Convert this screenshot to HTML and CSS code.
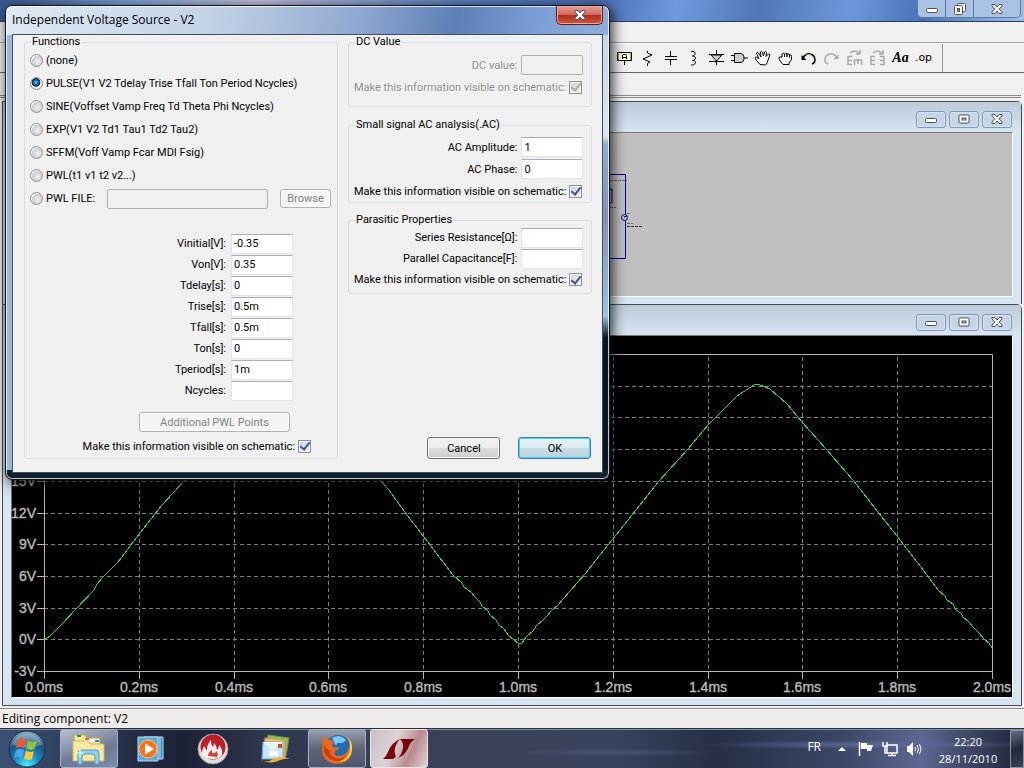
FILE: index.html
```html
<!DOCTYPE html>
<html lang="en">
<head>
<meta charset="utf-8">
<title>Independent Voltage Source - V2</title>
<link rel="stylesheet" href="styles.css">
</head>
<body>
<svg class="symbols" aria-hidden="true">
  <symbol id="win-min" viewBox="0 0 12 10"><rect x="0.5" y="4.5" width="11" height="4" rx="1" fill="#fff" stroke="#4b525e"/></symbol>
  <symbol id="win-max" viewBox="0 0 12 10"><rect x="1" y="1" width="10" height="8" rx="1" fill="#fff" stroke="#4b525e"/><rect x="4" y="4" width="4" height="2" fill="#c8d4e2" stroke="#4b525e"/></symbol>
  <symbol id="win-restore" viewBox="0 0 12 12"><rect x="3.5" y="0.5" width="8" height="8" rx="1" fill="#fff" stroke="#4b525e"/><rect x="0.5" y="2.5" width="8" height="9" rx="1" fill="#fff" stroke="#4b525e"/><rect x="3.5" y="5.5" width="2" height="3" fill="#88a" stroke="#4b525e"/></symbol>
  <symbol id="win-close" viewBox="0 0 12 10"><path d="M1 .5h3L6 3 8 .5h3v1.500L8.200 5 11 8v1.500H8L6 7 4 9.500H1V8l2.800-3L1 2z" fill="#fff" stroke="#4b525e"/></symbol>
</svg>

<div class="desktop">
<main class="app">
  <header class="app-title">
    <div class="app-controls">
      <button type="button" aria-label="Minimize"><svg width="12" height="10"><use href="#win-min"/></svg></button>
      <button type="button" aria-label="Restore"><svg width="12" height="12"><use href="#win-restore"/></svg></button>
      <button type="button" class="wide" aria-label="Close"><svg width="12" height="10"><use href="#win-close"/></svg></button>
    </div>
  </header>
  <div class="menu-strip"></div>
  <div class="toolbar">
    <div class="tools">
      <button type="button" aria-label="Label net"><svg width="17" height="18" viewBox="0 0 17 18"><path d="M1.500 3.500h14v8h-14z" fill="#ffffd0" stroke="#000"/><path d="M2.500 4v7M14.500 4v7" stroke="#aa6"/><path d="M8.500 12v4M6.500 10V6.500q0-1 1-1h2q1 0 1 1V10M6.500 8.500h4" fill="none" stroke="#000"/></svg></button>
      <button type="button" aria-label="Resistor"><svg width="17" height="18" viewBox="0 0 17 18"><path d="M8.500 2v2l4.500 2-9 4 7 3-2.500 1.500V17" fill="none" stroke="#000"/></svg></button>
      <button type="button" aria-label="Capacitor"><svg width="17" height="18" viewBox="0 0 17 18"><path d="M8.500 2v5M3 7.500h12M3 10.500h12M8.500 11v5" fill="none" stroke="#000"/></svg></button>
      <button type="button" aria-label="Inductor"><svg width="17" height="18" viewBox="0 0 17 18"><path d="M6 2.500h2c3 0 3 4-.5 4.500 4 0 4 4 0 4.500 4 0 4 4 0 4.500H6" fill="none" stroke="#000"/></svg></button>
      <button type="button" aria-label="Diode"><svg width="17" height="18" viewBox="0 0 17 18"><path d="M8.500 1v5M1 5.500h15M3 6l5.500 6L14 6zM1 12.500h15M8.500 12v4" fill="#ccc" stroke="#000"/></svg></button>
      <button type="button" aria-label="Component"><svg width="17" height="18" viewBox="0 0 17 18"><path d="M0 6.500h4M0 11.500h4M13 9h4M3.500 4.500H9q4 0 4 4.500t-4 4.500H3.500z" fill="#ccc" stroke="#000"/></svg></button>
      <button type="button" aria-label="Move"><svg width="17" height="18" viewBox="0 0 17 18"><path d="M6 15.500 1.500 10q-1-2 1-2L5 10 2.500 4.500q0-2 2-.5L7 8 6.500 3q1-1.500 2 0L9.500 7l1-4q1.500-1 2 .5l-.5 4 2.500-2.500q2 0 1 2L13 14l-1.500 2z" fill="#fff" stroke="#000"/></svg></button>
      <button type="button" aria-label="Drag"><svg width="17" height="18" viewBox="0 0 17 18"><path d="M6 15.500 2.500 11q-1-2 0-3H5V5q1.500-1.500 2.500 0v3V5Q9 3 10 5v3V5q2-1 2.500 1v2.500V6q2-.5 2 1.500v3L12 14v1.500z" fill="#fff" stroke="#000"/></svg></button>
      <button type="button" aria-label="Undo"><svg width="17" height="18" viewBox="0 0 17 18"><path d="M3 9q3-5 7-4 5 1 5 6 0 3-3 4" fill="none" stroke="#000" stroke-width="1.500"/><path d="M6 6q6-2 8 4" fill="none" stroke="#bb4"/><path d="M1.500 6v5h5z"/></svg></button>
      <button type="button" aria-label="Redo" disabled><svg width="17" height="18" viewBox="0 0 17 18"><path d="M14 9q-3-5-7-4-5 1-5 6 0 3 3 4" fill="none" stroke="#aaa" stroke-width="1.500"/><path d="M15.500 5v5h-5z" fill="#aaa"/></svg></button>
      <button type="button" aria-label="Rotate" disabled><svg width="17" height="18" viewBox="0 0 17 18"><path d="M4 4q4-4 9 0M14 1v4h-4M6 7.500H2v8h4M2 11.500h4M8.500 16v-5h7v5M12 11v4" fill="none" stroke="#aaa" stroke-width="1.500"/></svg></button>
      <button type="button" aria-label="Mirror" disabled><svg width="17" height="18" viewBox="0 0 17 18"><path d="M4 4q4-4 9 0M14 1v4h-4M6 7.500H2v8h4M2 11.500h4M11 7.500h4v8h-4M15 11.500h-4" fill="none" stroke="#aaa" stroke-width="1.500"/></svg></button>
      <button type="button" class="tool-text">Aa</button>
      <button type="button" class="tool-op">.op</button>
    </div>
  </div>
  <div class="tab-strip"></div>

  <div class="mdi">
    <section class="child schematic" aria-label="Schematic">
      <div class="child-title">
        <button type="button" aria-label="Minimize"><svg width="12" height="10"><use href="#win-min"/></svg></button>
        <button type="button" aria-label="Maximize"><svg width="12" height="10"><use href="#win-max"/></svg></button>
        <button type="button" aria-label="Close"><svg width="12" height="10"><use href="#win-close"/></svg></button>
      </div>
      <div class="child-view gray">
        <svg viewBox="0 0 1000 163" preserveAspectRatio="xMinYMin meet">
          <g fill="none" stroke="#0000a8"><path d="M560 41.500h53.500v84H560M598 56h2v14h-4M600 58l-2-3"/><circle cx="612.500" cy="84.500" r="3" fill="#c0c0c0"/><path d="M612 84l3-1" stroke="#000"/></g>
          <g stroke="#666" stroke-dasharray="3 1"><path d="M598 47.500h17M598 74.500h6M615 80.500h3M615 90.500h6"/><path d="M615 93.500h15" stroke="#333"/></g>
        </svg>
      </div>
    </section>
    <section class="child plot" aria-label="Waveform">
      <div class="child-title">
        <button type="button" aria-label="Minimize"><svg width="12" height="10"><use href="#win-min"/></svg></button>
        <button type="button" aria-label="Maximize"><svg width="12" height="10"><use href="#win-max"/></svg></button>
        <button type="button" aria-label="Close"><svg width="12" height="10"><use href="#win-close"/></svg></button>
      </div>
      <div class="child-view black">
        <svg viewBox="12 336 1000 360" preserveAspectRatio="xMinYMin meet">
          <g fill="none" stroke="#808080" stroke-dasharray="4 3">
            <path d="M44 386.500h948M44 417.500h948M44 449.500h948M44 481.500h948M44 513.500h948M44 544.500h948M44 576.500h948M44 608.500h948M44 639.500h948"/>
            <path d="M139.500 357v314M234.500 357v314M328.500 357v314M423.500 357v314M518.500 357v314M613.500 357v314M708.500 357v314M802.500 357v314M897.500 357v314"/>
          </g>
          <g fill="none" stroke="#b8b8b8">
            <path d="M44.500 354.500h948v317h-948z"/>
            <path d="M37 354.500h7M37 386.500h7M37 417.500h7M37 449.500h7M37 481.500h7M37 513.500h7M37 544.500h7M37 576.500h7M37 608.500h7M37 639.500h7M37 671.500h7"/>
            <path d="M44.500 671v8M139.500 671v8M234.500 671v8M328.500 671v8M423.500 671v8M518.500 671v8M613.500 671v8M708.500 671v8M802.500 671v8M897.500 671v8M992.500 671v8"/>
          </g>
          <path class="trace" d="M44 640 50 636 62 624 76 609 94 590 97 584 103 577 118 562 140 533 162 505 185 480 214 449 234 425 246 413 263 396 283 384 296 389 313 404 328 422 352 449 379 479 389 490 404 511 424 537 440 558 453 575 462 583 464 587 471 592 475 597 480 602 482 606 488 611 490 615 496 620 499 625 504 629 508 635 514 640 518 643 522 643 526 637 533 631 536 626 543 620 547 616 551 611 558 605 563 599 585 574 600 555 632 515 659 481 688 449 708 425 720 413 737 396 754 385 757 384 760 385 770 389 787 404 802 422 826 449 853 480 878 512 897 536 927 575 938 590 945 596 947 600 953 604 956 610 961 613 963 617 969 622 973 627 978 632 985 640 989 643 992 648"/>
          <g class="axis" text-anchor="end">
            <text x="36" y="486">15V</text><text x="36" y="518">12V</text><text x="36" y="549">9V</text><text x="36" y="581">6V</text><text x="36" y="613">3V</text><text x="36" y="644">0V</text><text x="36" y="676">-3V</text>
          </g>
          <g class="axis" text-anchor="middle">
            <text x="44" y="692">0.0ms</text><text x="139" y="692">0.2ms</text><text x="234" y="692">0.4ms</text><text x="328" y="692">0.6ms</text><text x="423" y="692">0.8ms</text><text x="518" y="692">1.0ms</text><text x="613" y="692">1.2ms</text><text x="708" y="692">1.4ms</text><text x="802" y="692">1.6ms</text><text x="897" y="692">1.8ms</text><text x="992" y="692">2.0ms</text>
          </g>
        </svg>
      </div>
    </section>
  </div>
  <footer class="status">Editing component: V2</footer>
</main>

<nav class="taskbar" aria-label="Taskbar">
  <button type="button" class="start" aria-label="Start">
    <svg width="38" height="38" viewBox="0 0 38 38">
      <defs><radialGradient id="orb" cx=".5" cy=".95" r=".95"><stop offset="0" stop-color="#4ff0ff"/><stop offset=".35" stop-color="#1c8cc8"/><stop offset=".7" stop-color="#1c4f7d"/><stop offset="1" stop-color="#8fb2c8"/></radialGradient></defs>
      <circle cx="19" cy="19" r="18" fill="url(#orb)" stroke="#15304c"/>
      <path d="M4 15a15.500 15.500 0 0 1 30 0Q19 20 4 15z" fill="#fff" opacity=".25"/>
      <path d="M10 10q4-2.500 8-.5l-2 8.500q-4-2-8 0z" fill="#f0592a"/><path d="M20 10.500q4 2.500 9 .5l-2.500 8q-4 2-8-.5z" fill="#8cc63e"/><path d="M8 20q4-2 8 0l-2 8q-4-2-8 0z" fill="#4aa8ea"/><path d="M18 20.500q4 2.500 8 .5l-2 8q-4 2-8-.5z" fill="#fdc830"/>
    </svg>
  </button>
  <button type="button" class="task open" aria-label="Explorer">
    <svg width="34" height="32" viewBox="0 0 34 32"><path d="M2 6V2h11l2 3h13v8H2z" fill="#f6e3a0" stroke="#c8a850"/><path d="M5 2h4v2H5z" fill="#2a2"/><path d="M12 6h15v3H12z" fill="#fff"/><path d="M13 5h4v2h-4z" fill="#d63"/><path d="M23 7h4v2h-4z" fill="#38c"/><path d="M1 8h15l2 3h14v17H1z" fill="#f9e9a0" stroke="#d2b560"/><path d="M6 31V20q0-3 3-3h15q3 0 3 3v11h-4v-7q0-3-3-3h-7q-3 0-3 3v7z" fill="#8ed2ef" stroke="#4c9fc4"/><path d="M8 16v8M4 20h8" stroke="#fff"/></svg>
  </button>
  <button type="button" class="task" aria-label="Media Player">
    <svg width="28" height="27" viewBox="0 0 28 27"><path d="M7 2h19v22H7z" fill="#3c8fc2" stroke="#b9ddf0"/><path d="M23 2v22" stroke="#b9ddf0"/><path d="M1 2h20v24H1z" fill="#5aa9d6" stroke="#b9ddf0"/><circle cx="11" cy="14" r="9" fill="#f0751c" stroke="#ffc38a"/><path d="M8 8.500 17 14l-9 5.500z" fill="#fff"/></svg>
  </button>
  <button type="button" class="task" aria-label="Disc Burner">
    <svg width="32" height="32" viewBox="0 0 32 32"><circle cx="16" cy="16" r="15" fill="#ddd" stroke="#999"/><circle cx="16" cy="14" r="12.500" fill="#b9202a"/><path d="M5 22q-1-5 3-9 0 4 2 4 0-6 4-10 0 5 2 7 1-2 1-4 3 3 3 7 2-2 2-5 4 4 3 10-3 4-9 4-8 0-11-4z" fill="#f3eeee"/><path d="M11 23q0-4 4-6 0 4 2 3 2 0 2-2 3 3 1 6" fill="#c9474c"/></svg>
  </button>
  <button type="button" class="task" aria-label="Mail">
    <svg width="32" height="30" viewBox="0 0 32 30"><path d="m9 1 21 3-3 18-20-3z" fill="#8cc063" stroke="#5f9a45"/><path d="m6 4 20 2v18H5z" fill="#f4bd6a" stroke="#d3923c"/><path d="M4 8h20v17H3z" fill="#c8e6f8" stroke="#69a8d0"/><path d="M4 8h20l-10 9z" fill="#e7f5fd"/><path d="M19 10h4v4h-4z" fill="#c0521f"/><path d="M10 17h9v5h-9z" fill="#fff"/><path d="M0 25q7 5 14 0 8-4 17 0-7-1-12 2-9 4-19-2z" fill="#f2ae3c"/></svg>
  </button>
  <button type="button" class="task open" aria-label="Firefox">
    <svg width="34" height="32" viewBox="0 0 34 32"><circle cx="18" cy="14" r="12" fill="#1f6cb4"/><path d="M12 5q7-5 14 2-3 4-6 3t-4 3z" fill="#7bc6ee"/><path d="M4 3q3 4 7 4l3 3q-3 2-1 4 3 1 6 0 0 3-4 4-2 5 4 5 8-1 10-8 1-8-3-12 7 6 6 14Q31 30 17 31 2 29 2 16 2 9 4 3z" fill="#ea6a1b"/><path d="M26 3q5 4 4 13-1 10-12 12 12 2 14-11Q33 8 26 3z" fill="#ffd246"/><path d="M4 12q-2 12 11 16 9 1 12-6-5 5-11 3-7-2-6-7-3-2-6-6z" fill="#c93e13"/></svg>
  </button>
  <button type="button" class="task active" aria-label="LTspice">
    <svg width="34" height="22" viewBox="0 0 34 22"><path d="M1 21q3-2 5-7Q9 5 18 1q-4 4-5 9-1 6 1 8-1 2-3 3z" fill="#7a0508"/><path d="M18 1h15q-4 2-6 7-3 9-11 12 4-4 5-10 1-5-3-9z" fill="#7a0508"/></svg>
  </button>
  <div class="tray">
    <span class="lang">FR</span>
    <button type="button" aria-label="Show hidden icons"><svg width="10" height="6" viewBox="0 0 10 6"><path d="m1 5 4-4 4 4z" fill="#fff"/></svg></button>
    <button type="button" aria-label="Action Center"><svg width="16" height="16" viewBox="0 0 16 16"><path d="M1.500 1v14" stroke="#fff" stroke-width="1.500"/><path d="M3 2h6v2h6l-2 6H9V8H3z" fill="#fff"/></svg></button>
    <button type="button" aria-label="Network"><svg width="16" height="16" viewBox="0 0 16 16"><path d="M5 4h10v8H5zM10 12v2M6 14.500h8M1 1v4h4V1M3 5v7h2" fill="none" stroke="#fff" stroke-width="1.500"/></svg></button>
    <button type="button" aria-label="Volume"><svg width="16" height="16" viewBox="0 0 16 16"><path d="M1 5h2l4-4v14l-4-4H1z" fill="#fff"/><path d="M9 6q1 2 0 4M11 4q3 4 0 8M13.500 3q3 5 0 10" fill="none" stroke="#fff"/></svg></button>
    <div class="clock"><time>22:20</time><span>28/11/2010</span></div>
    <button type="button" class="show-desktop" aria-label="Show desktop"></button>
  </div>
</nav>

<form class="dialog" role="dialog" aria-labelledby="dialog-title">
  <div class="dialog-title">
    <h1 id="dialog-title">Independent Voltage Source - V2</h1>
    <button type="button" class="dialog-close" aria-label="Close"><svg width="12" height="10"><use href="#win-close"/></svg></button>
  </div>
  <div class="dialog-body">
    <fieldset class="group functions">
      <legend>Functions</legend>
      <div class="radio-row"><input type="radio" name="fn" id="f0"><label for="f0">(none)</label></div>
      <div class="radio-row"><input type="radio" name="fn" id="f1" checked><label for="f1">PULSE(V1 V2 Tdelay Trise Tfall Ton Period Ncycles)</label></div>
      <div class="radio-row"><input type="radio" name="fn" id="f2"><label for="f2">SINE(Voffset Vamp Freq Td Theta Phi Ncycles)</label></div>
      <div class="radio-row"><input type="radio" name="fn" id="f3"><label for="f3">EXP(V1 V2 Td1 Tau1 Td2 Tau2)</label></div>
      <div class="radio-row"><input type="radio" name="fn" id="f4"><label for="f4">SFFM(Voff Vamp Fcar MDI Fsig)</label></div>
      <div class="radio-row"><input type="radio" name="fn" id="f5"><label for="f5">PWL(t1 v1 t2 v2...)</label></div>
      <div class="radio-row"><input type="radio" name="fn" id="f6"><label for="f6">PWL FILE:</label><input class="field file" type="text" aria-label="PWL file" disabled><button type="button" class="btn browse" disabled>Browse</button></div>
      <div class="params">
        <label for="p1">Vinitial[V]:</label><input class="field" type="text" id="p1" value="-0.35">
        <label for="p2">Von[V]:</label><input class="field" type="text" id="p2" value="0.35">
        <label for="p3">Tdelay[s]:</label><input class="field" type="text" id="p3" value="0">
        <label for="p4">Trise[s]:</label><input class="field" type="text" id="p4" value="0.5m">
        <label for="p5">Tfall[s]:</label><input class="field" type="text" id="p5" value="0.5m">
        <label for="p6">Ton[s]:</label><input class="field" type="text" id="p6" value="0">
        <label for="p7">Tperiod[s]:</label><input class="field" type="text" id="p7" value="1m">
        <label for="p8">Ncycles:</label><input class="field" type="text" id="p8">
      </div>
      <button type="button" class="btn points" disabled>Additional PWL Points</button>
      <div class="check-row"><label for="c1">Make this information visible on schematic:</label><input type="checkbox" id="c1" checked></div>
    </fieldset>
    <div class="side">
      <fieldset class="group dc">
        <legend>DC Value</legend>
        <div class="side-row off"><label for="d1">DC value:</label><input class="field" type="text" id="d1" disabled></div>
        <div class="side-row check off"><label for="c2">Make this information visible on schematic:</label><input type="checkbox" id="c2" checked disabled></div>
      </fieldset>
      <fieldset class="group ac">
        <legend>Small signal AC analysis(.AC)</legend>
        <div class="side-row"><label for="a1">AC Amplitude:</label><input class="field" type="text" id="a1" value="1"></div>
        <div class="side-row"><label for="a2">AC Phase:</label><input class="field" type="text" id="a2" value="0"></div>
        <div class="side-row check"><label for="c3">Make this information visible on schematic:</label><input type="checkbox" id="c3" checked></div>
      </fieldset>
      <fieldset class="group parasitic">
        <legend>Parasitic Properties</legend>
        <div class="side-row"><label for="r1">Series Resistance[Ω]:</label><input class="field" type="text" id="r1"></div>
        <div class="side-row"><label for="r2">Parallel Capacitance[F]:</label><input class="field" type="text" id="r2"></div>
        <div class="side-row check"><label for="c4">Make this information visible on schematic:</label><input type="checkbox" id="c4" checked></div>
      </fieldset>
      <div class="actions">
        <button type="button" class="btn">Cancel</button>
        <button type="submit" class="btn default">OK</button>
      </div>
    </div>
  </div>
</form>
</div>
</body>
</html>
```
FILE: styles.css
```css
* { box-sizing: border-box; }
body { margin: 0; font-family: Roboto, "Liberation Sans", sans-serif; font-size: 11px; color: #000; }
button, input { font: inherit; color: inherit; margin: 0; }
button { padding: 0; border: 0; background: none; display: flex; align-items: center; justify-content: center; }
svg { display: block; }
.symbols { display: none; }

.desktop { position: relative; min-height: 100vh; display: flex; flex-direction: column; overflow: hidden; }
.app { flex: 1; display: flex; flex-direction: column; background: #f0f0f0; }

.app-title { height: 22px; border-bottom: 1px solid #2b3d5c; display: flex; justify-content: flex-end; align-items: flex-start; padding-right: 3px; background: linear-gradient(100deg, #3b5690 0%, #7c9fd6 12%, #c4c2dc 25%, #5a7fc0 45%, #4a6db4 58%, #6d9ae0 66%, #5377b5 74%, #6b98dc 83%, #4b72b6 90%, #9fbee8 100%); }
.app-controls { display: flex; height: 18px; border: 1px solid #5c7aa6; border-top: 0; border-radius: 0 0 5px 5px; background: #a9c1e2; }
.app-controls button { width: 28px; border-right: 1px solid #5c7aa6; }
.app-controls .wide { width: 46px; border-right: 0; }

.menu-strip { height: 21px; border-bottom: 1px solid #a0a0a0; }
.toolbar { height: 30px; border-bottom: 1px solid #696969; border-top: 1px solid #fff; display: flex; justify-content: flex-end; padding-right: 81px; }
.tools { display: flex; align-items: center; padding-right: 7px; border-right: 1px solid #999; }
.tools button { width: 23px; height: 20px; }
.tool-text { font: italic bold 14px/20px "Liberation Serif", serif; }
.tools .tool-op { font: 11px/20px "DejaVu Sans", sans-serif; }
.tab-strip { height: 25px; margin-right: 3px; border-bottom: 3px double #8a8a8a; }

.mdi { flex: 1; padding: 3px 2px 2px 2px; display: flex; flex-direction: column; }
.child { border: 1px solid #4a4a4a; border-bottom: 0; border-radius: 0 5px 0 0; background: #d7e4f2; padding: 0 8px 7px; display: flex; flex-direction: column; }
.plot { flex: 1; border-bottom: 1px solid #4a4a4a; }
.child-title { height: 30px; margin: 0 -8px; padding: 4px 9px 0 0; display: flex; gap: 3px; align-items: center; justify-content: flex-end; background: linear-gradient(#bccad9, #d7e4f2); }
.child-title button { width: 30px; height: 17px; border: 1px solid #8596b3; border-radius: 3px; background: #c6d5e5; box-shadow: inset 0 0 0 1px #d5e1ee; }
.child-view { border: 1px solid #777; border-right-color: #fff; border-bottom-color: #fff; overflow: hidden; }
.child-view svg { width: 100%; }
.gray { background: #c0c0c0; }
.black { background: #000; flex: 1; }
.trace { fill: none; stroke: #30d830; stroke-width: 1; shape-rendering: crispEdges; }
.axis { font: 14px "Liberation Sans", sans-serif; fill: #b8b8b8; stroke: #b8b8b8; stroke-width: .4; }

.status { border-top: 1px solid #888; height: 20px; padding: 0 2px; font: 12px/20px "Open Sans", sans-serif; background: #f0eceb; box-shadow: inset 0 1px #fff; }

.taskbar { height: 40px; display: flex; gap: 4px; align-items: stretch; border-top: 1px solid #28303d; box-shadow: inset 0 1px #7f93a8; background: radial-gradient(ellipse at 85% 40%, #5d6792 0, transparent 14%), radial-gradient(ellipse at 60% 60%, #4a5474 0, transparent 12%), linear-gradient(90deg, #3c5275 0, #2b3450 10%, #1c2135 18%, #30384f 26%, #3a4158 44%, #3a435e 60%, #262f46 70%, #3c4566 82%, #5d6790 90%, #1c2234 100%); }
.start { width: 54px; margin-right: 2px; }
.task { width: 58px; border-radius: 3px; }
.open { border: 1px solid #a9b2c4; background: linear-gradient(#98a1b2, #5d6577 50%, #4d566d); }
.start + .open { background: linear-gradient(160deg, #b7bfd2, #6c7894 60%, #7e8eb0); }
.active { border: 1px solid #f0e4e6; background: linear-gradient(115deg, #c9c0c6 0, #dcd3d6 40%, #b98a90 70%, #e3d2d5); }
.tray { margin-left: auto; display: flex; align-items: center; color: #fff; font: 12px/17px "Open Sans", sans-serif; }
.tray button { width: 24px; }
.tray .lang { margin: 0 9px 4px 0; }
.clock { width: 84px; display: flex; flex-direction: column; align-items: center; margin-top: 2px; font-size: 11px; }
.tray .show-desktop { width: 14px; height: 38px; border: 1px solid #8b93a4; background: linear-gradient(160deg, #68707f, #20283a 50%, #3b4456); }

.dialog { position: absolute; left: 5px; top: 5px; width: 605px; padding: 0 6px 6px; border: 1px solid #111820; border-radius: 7px; display: flex; flex-direction: column; box-shadow: inset 0 0 0 1px rgba(255,255,255,.75), 2px 3px 14px rgba(0,0,0,.85); background: linear-gradient(transparent 0, transparent 464px, #10202c 464px), linear-gradient(90deg, #9ab8d8 0, #8aabcf 50%, transparent 50%) 0 29px / 100% 100% no-repeat, linear-gradient(transparent 29px, #c5d6e8 29px, #dde6ef 130px, #90aecb 138px, #7f90bb 210px, #9dc0e6 310px, #0b151e 332px), linear-gradient(100deg, #dfe9f3 0, #c3d2e6 30%, #8fa7d0 52%, #5c7fb6 66%, #7b9fd6 78%, #a8bedb 100%); }
.dialog-title { height: 28px; display: flex; align-items: flex-start; justify-content: space-between; }
.dialog-title h1 { margin: 0; font: 12px/28px "Open Sans", sans-serif; }
.dialog-close { width: 47px; height: 19px; border: 1px solid #5b1a18; border-top: 0; border-radius: 0 0 5px 5px; box-shadow: inset 0 0 0 1px #e8a69c; background: linear-gradient(#e3a194 0, #d0675a 48%, #b12b1b 50%, #d0593e 100%); }
.dialog-body { border: 1px solid #43505c; background: #f0f0f0; display: grid; grid-template-columns: 314px 1fr; gap: 10px; padding: 0 10px 13px 11px; }

.group { margin: 0; min-width: 0; padding: 0 6px 2px 5px; border: 1px solid #d3dde3; border-radius: 3px; }
.group legend { margin-left: 1px; padding: 0 1px; line-height: 14px; }
.radio-row { display: flex; align-items: center; height: 23px; gap: 3px; }
label { white-space: nowrap; }
input[type="radio"] { appearance: none; width: 13px; height: 13px; flex: none; border: 1px solid #8e8f8f; border-radius: 50%; background: radial-gradient(circle at 60% 60%, #f0f0f0 0, #c9cdd0 60%, #f4f4f4 62%); }
input[type="radio"]:checked { background: radial-gradient(circle at 45% 40%, #6fd0f0 0, #15689c 25%, #0d2f50 45%, #e8e8e8 52%); }
input[type="checkbox"] { appearance: none; width: 13px; height: 13px; flex: none; border: 1px solid #8e8f8f; background: linear-gradient(135deg, #cbcfd5, #f6f6f6); box-shadow: inset 0 0 0 1px #f4f4f4; display: grid; place-items: center; }
input[type="checkbox"]::before { content: ""; width: 4px; height: 8px; border: solid #405493; border-width: 0 2px 2px 0; transform: rotate(38deg); margin-top: -2px; }
input[type="checkbox"]:disabled::before { border-color: #aaa; }
.field { width: 62px; height: 20px; padding: 0 2px; border: 1px solid #e2e3ea; border-top-color: #abadb3; background: #fff; line-height: 16px; }
.field:disabled { border-color: #afafaf; border-radius: 2px; background: #f0f0f0; }
.file { width: 161px; margin-left: 9px; }
.btn { width: 73px; height: 22px; border: 1px solid #707070; border-radius: 3px; box-shadow: inset 0 0 0 1px #fbfbfb; background: linear-gradient(#f2f2f2 0, #ebebeb 49%, #dddddd 50%, #cfcfcf 100%); }
.btn:disabled { border-color: #adb2b5; background: #f4f4f4; color: #838383; }
.btn.default { border-color: #3c7fb1; box-shadow: inset 0 0 0 1px #46d2f6; background: linear-gradient(#eaf3f8 0, #dcebf3 49%, #c8dce6 50%, #bad0dc 100%); }
.browse { width: 51px; height: 19px; margin-left: auto; }
.params { display: grid; grid-template-columns: 1fr 62px; column-gap: 5px; grid-auto-rows: 21px; align-items: center; text-align: right; margin: 23px 38px 11px 0; }
.points { width: 151px; height: 20px; margin: 0 0 4px 109px; }
.check-row { display: flex; align-items: center; justify-content: flex-end; gap: 3px; height: 20px; padding-right: 20px; }
.side { display: flex; flex-direction: column; }
.side .group { padding-right: 8px; }
.side-row { display: flex; align-items: center; justify-content: flex-end; gap: 4px; height: 22px; }
.side-row.check { gap: 3px; padding-right: 1px; }
.off { color: #8a8a8a; text-shadow: 1px 1px #fff; }
.side .dc { padding-top: 5px; padding-bottom: 8px; margin-bottom: 11px; }
.side .ac { padding-top: 4px; padding-bottom: 0; margin-bottom: 10px; }
.side .parasitic { padding-bottom: 3px; }
.parasitic .side-row { height: 21px; }
.actions { margin-top: auto; padding-right: 1px; display: flex; justify-content: flex-end; gap: 18px; }
```
